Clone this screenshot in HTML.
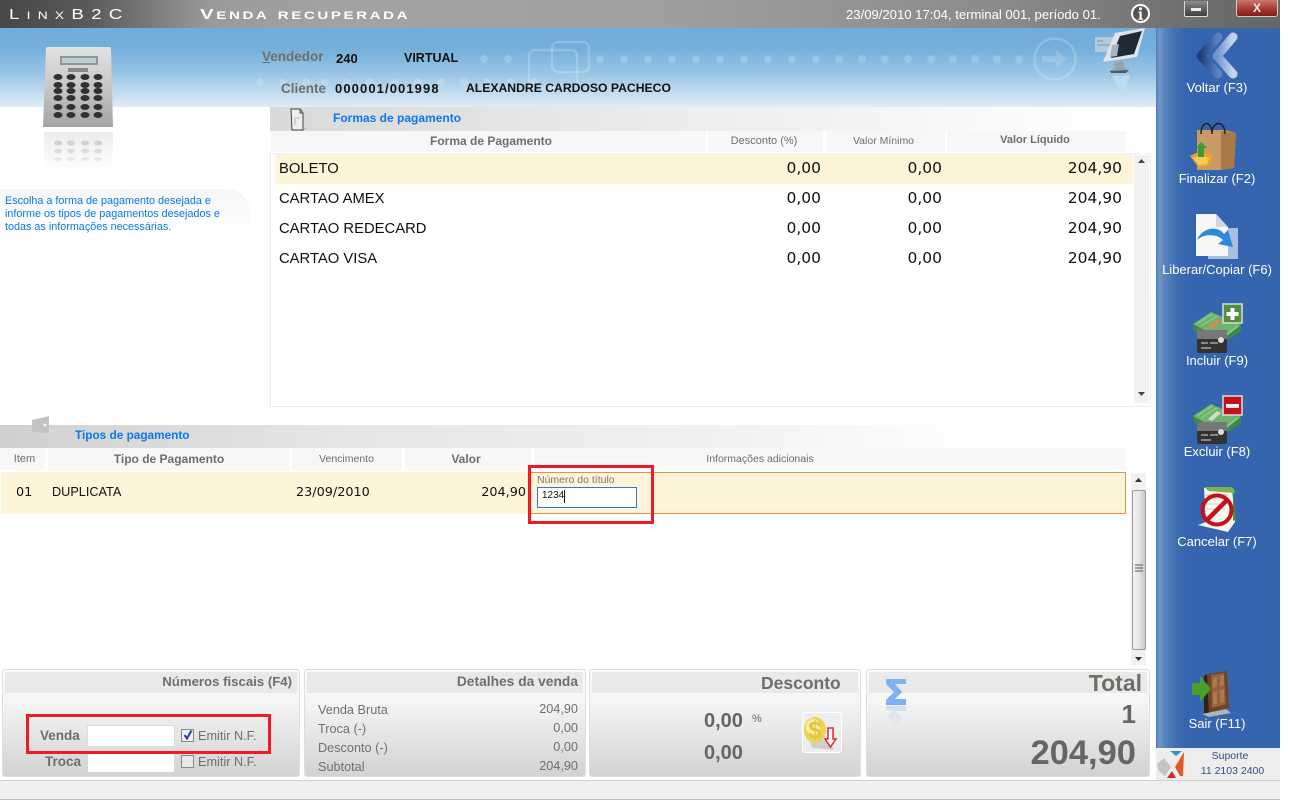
<!DOCTYPE html>
<html lang="pt-BR"><head><meta charset="utf-8"><title>Venda recuperada</title>
<style>
html,body{margin:0;padding:0;background:#fff}
#p{position:relative;width:1294px;height:810px;overflow:hidden;background:#fff;font-family:"Liberation Sans",sans-serif}
#p div,#p svg{position:absolute}
.t{white-space:nowrap;line-height:1}
.r{text-align:right}
.c{text-align:center}
.b{font-weight:bold}
.row{font-size:14.800px;color:#111}
.n{font-family:"DejaVu Sans",sans-serif;font-size:15.500px;color:#111;text-align:right;width:100px;white-space:nowrap;line-height:1}
.n2{font-family:"DejaVu Sans",sans-serif;font-size:12.800px;color:#111;white-space:nowrap;line-height:1}
.hd{top:131px;height:21px;background:#f7f7f7}
.hd2{top:448px;height:22px;background:#f7f7f7}
.g{color:#6d6f68}
.panel{top:669px;height:106px;background:linear-gradient(#fafafa 0,#f6f6f6 30px,#d2d2d2 100%);border:1px solid #d8e0e6;border-radius:3px;box-sizing:content-box}
.ph{left:2px;top:2px;height:21px;background:#e9e9e9}
.sl{left:1156px;width:122px;text-align:center;color:#fff;font-size:13px;line-height:14px;white-space:nowrap}
.red{border:3px solid #ed1c24;box-sizing:border-box}
.lbl{font-size:12.700px;color:#6f716c}
</style></head><body><div id="p">

<!-- title bar -->
<div style="left:0;top:0;width:1280px;height:28px;background:linear-gradient(90deg,#474747 0,#5a5a5a 90px,#9a9a9a 210px,#a2a2a2 330px,#a0a0a0 650px,#8b8b8b 1000px,#6d6d6d 1200px,#666 1280px)"></div>
<div class="t" style="left:9px;top:7px;font-size:15px;color:#fff;letter-spacing:5.800px;font-variant:small-caps;transform:scaleX(1.25);transform-origin:left">LinxB2C</div>
<div class="t b" style="left:200px;top:7px;font-size:15px;color:#fff;letter-spacing:1.900px;font-variant:small-caps;transform:scaleX(1.37);transform-origin:left">Venda recuperada</div>
<div class="t" style="left:846px;top:8px;font-size:13.100px;color:#fff">23/09/2010 17:04, terminal 001, período 01.</div>
<svg style="left:1130px;top:3px" width="21" height="21" viewBox="0 0 21 21"><circle cx="10.500" cy="10.500" r="8.500" fill="#555" stroke="#fff" stroke-width="2"/><circle cx="10.500" cy="5.800" r="1.500" fill="#fff"/><path d="M8.500 8.500h3.200v7h1.300v1.200H8.300v-1.200h1.200V9.700h-1z" fill="#fff"/></svg>
<div style="left:1184px;top:1px;width:24px;height:16px;background:linear-gradient(#8d8d8d,#5e5e5e 55%,#3e3e3e);border:1px solid #ddd;border-top:0;box-sizing:border-box;border-radius:0 0 2px 2px"></div>
<div style="left:1191px;top:8px;width:10px;height:3px;background:#eee"></div>
<div style="left:1236px;top:0;width:42px;height:17px;background:linear-gradient(#c9776e,#a93a31 55%,#7d1d15);border:1px solid #ccc;border-top:0;box-sizing:border-box;border-radius:0 0 3px 3px"></div>
<div class="t b c" style="left:1236px;top:2px;width:42px;font-size:12px;color:#eee">X</div>

<!-- blue header -->
<div style="left:0;top:28px;width:1156px;height:79px;background:linear-gradient(#71acda 0,#74aedb 25%,#9ac5e5 58%,#dfedf6 100%)"></div>
<svg style="left:0;top:28px" width="1156" height="79" viewBox="0 28 1156 79">
<g fill="#fff" fill-opacity=".17">
<circle cx="484" cy="59" r="4"/><circle cx="508" cy="59" r="4"/><circle cx="600" cy="59" r="4"/><circle cx="624" cy="59" r="4"/>
<circle cx="648" cy="59" r="4"/><circle cx="672" cy="59" r="4"/><circle cx="696" cy="59" r="4"/><circle cx="720" cy="59" r="4"/>
<circle cx="744" cy="59" r="4"/><circle cx="768" cy="59" r="4"/><circle cx="792" cy="59" r="4"/><circle cx="816" cy="59" r="4"/>
<circle cx="839" cy="59" r="4"/><circle cx="862" cy="59" r="4"/><circle cx="885" cy="59" r="4"/><circle cx="908" cy="59" r="4"/>
<circle cx="931" cy="59" r="4"/><circle cx="953" cy="59" r="4"/><circle cx="975" cy="59" r="4"/><circle cx="997" cy="59" r="4"/><circle cx="1019" cy="59" r="4"/>
<circle cx="260" cy="82" r="4"/><circle cx="283" cy="82" r="4"/><circle cx="306" cy="82" r="4"/><circle cx="325" cy="82" r="4"/><circle cx="347" cy="82" r="4"/><circle cx="370" cy="82" r="4"/><circle cx="395" cy="82" r="4"/><circle cx="418" cy="82" r="4"/><circle cx="441" cy="82" r="4"/><circle cx="464" cy="82" r="4"/><circle cx="487" cy="82" r="4"/><circle cx="511" cy="82" r="4"/><circle cx="534" cy="82" r="4"/>
</g>
<g fill="none" stroke="#fff" stroke-opacity=".2" stroke-width="2.500">
<rect x="529" y="50" width="48" height="38" rx="6"/><rect x="552" y="42" width="37" height="30" rx="6"/>
<circle cx="1055" cy="59" r="20.500"/>
</g>
<path d="M1042 56h14v-6l11 9-11 9v-6h-14z" fill="#fff" fill-opacity=".16"/>
</svg>
<!-- monitor -->
<svg style="left:1090px;top:28px" width="58" height="70" viewBox="0 0 58 70">
<defs><linearGradient id="mr" x1="0" y1="0" x2="0" y2="1"><stop offset="0" stop-color="#fff" stop-opacity=".35"/><stop offset="1" stop-color="#fff" stop-opacity="0"/></linearGradient></defs>
<path d="M5 9h25v15H5z" fill="#bcd0dd" fill-opacity=".85"/>
<path d="M7 13h6M7 17h14" stroke="#7d93a2" stroke-width="1"/>
<path d="M25 5L55 0 47 29 13 34z" fill="#dfe4e8"/>
<path d="M30 8l22-5-8 23-23 4z" fill="#1f2a33"/>
<path d="M22 17l7-1-2 12-7 1z" fill="#a5b5bf"/>
<path d="M24 35l9-2 1 6 5 3-8 2-11-1 5-3z" fill="#9aa2a8"/>
<path d="M20 43l19-1-3 3-15 0z" fill="#4e5a62"/>
<path d="M22 48l18-1-2 6-4 14-6-8z" fill="url(#mr)"/>
</svg>

<!-- calculator -->
<svg style="left:40px;top:44px" width="76" height="130" viewBox="0 0 76 130">
<defs><linearGradient id="cg" x1="0" y1="0" x2="0" y2="1"><stop offset="0" stop-color="#e2e2e2"/><stop offset=".55" stop-color="#c4c4c4"/><stop offset="1" stop-color="#a3a3a3"/></linearGradient>
<linearGradient id="rf" x1="0" y1="0" x2="0" y2="1"><stop offset="0" stop-color="#ececec"/><stop offset="1" stop-color="#fff"/></linearGradient></defs>
<path d="M6 4Q6 3 8 3h61q2 0 2 1l2 79H3z" fill="url(#cg)"/>
<rect x="20" y="12" width="38" height="9" fill="#8d979c"/><rect x="22" y="14" width="34" height="5" fill="#c0cfd6"/>
<rect x="28" y="24" width="20" height="4" fill="#888"/>
<g fill="#2f3133">
<ellipse cx="18" cy="33" rx="4.500" ry="3"/><ellipse cx="31" cy="33" rx="4.500" ry="3"/><ellipse cx="45" cy="33" rx="4.500" ry="3"/><ellipse cx="58" cy="33" rx="4.500" ry="3"/>
<ellipse cx="18" cy="41" rx="4.500" ry="3"/><ellipse cx="31" cy="41" rx="4.500" ry="3"/><ellipse cx="45" cy="41" rx="4.500" ry="3"/><ellipse cx="58" cy="41" rx="4.500" ry="3"/>
<ellipse cx="18" cy="47" rx="4.500" ry="3"/><ellipse cx="31" cy="47" rx="4.500" ry="3"/><ellipse cx="45" cy="47" rx="4.500" ry="3"/><ellipse cx="58" cy="47" rx="4.500" ry="3"/>
<ellipse cx="18" cy="54" rx="4.500" ry="3"/><ellipse cx="31" cy="54" rx="4.500" ry="3"/><ellipse cx="45" cy="54" rx="4.500" ry="3"/><ellipse cx="58" cy="54" rx="4.500" ry="3"/>
<ellipse cx="18" cy="63" rx="4.500" ry="3"/><ellipse cx="31" cy="63" rx="4.500" ry="3"/><ellipse cx="45" cy="63" rx="4.500" ry="3"/><ellipse cx="58" cy="63" rx="4.500" ry="3"/>
<ellipse cx="18" cy="71" rx="4.500" ry="3"/><ellipse cx="31" cy="71" rx="4.500" ry="3"/><ellipse cx="45" cy="71" rx="4.500" ry="3"/><ellipse cx="58" cy="71" rx="4.500" ry="3"/>
</g>
<path d="M4 88h69l-1 40H4z" fill="url(#rf)"/>
<g fill="#d2d2d2"><ellipse cx="18" cy="99" rx="4" ry="2.500"/><ellipse cx="31" cy="99" rx="4" ry="2.500"/><ellipse cx="45" cy="99" rx="4" ry="2.500"/><ellipse cx="58" cy="99" rx="4" ry="2.500"/>
<ellipse cx="18" cy="107" rx="4" ry="2.200" opacity=".7"/><ellipse cx="31" cy="107" rx="4" ry="2.200" opacity=".7"/><ellipse cx="45" cy="107" rx="4" ry="2.200" opacity=".7"/><ellipse cx="58" cy="107" rx="4" ry="2.200" opacity=".7"/>
<ellipse cx="18" cy="115" rx="4" ry="2" opacity=".4"/><ellipse cx="31" cy="115" rx="4" ry="2" opacity=".4"/><ellipse cx="45" cy="115" rx="4" ry="2" opacity=".4"/><ellipse cx="58" cy="115" rx="4" ry="2" opacity=".4"/></g>
</svg>

<!-- help bubble -->
<div style="left:0;top:189px;width:250px;height:76px;background:linear-gradient(#f4f6f8,#fff 60%);border-radius:0 22px 0 0"></div>
<div style="left:5px;top:195px;font-size:10.800px;line-height:13px;color:#0b78e6;white-space:nowrap">Escolha a forma de pagamento desejada e<br>informe os tipos de pagamentos desejados e<br>todas as informações necessárias.</div>

<!-- vendedor/cliente -->
<div class="t b g" style="left:262px;top:50px;font-size:13.500px"><u>V</u>endedor</div>
<div class="t b" style="left:336px;top:52px;font-size:13px;color:#111">240</div>
<div class="t b" style="left:404px;top:52px;font-size:12.500px;color:#111">VIRTUAL</div>
<div class="t b g" style="left:281px;top:82px;font-size:13.500px">Cliente</div>
<div class="t b" style="left:335px;top:82px;font-size:13px;letter-spacing:1.100px;color:#111">000001/001998</div>
<div class="t b" style="left:466px;top:82px;font-size:12.200px;color:#111">ALEXANDRE CARDOSO PACHECO</div>

<!-- Formas de pagamento -->
<div style="left:270px;top:107px;width:886px;height:24px;background:linear-gradient(90deg,#d9d9d9,#ececec 45%,#fff 96%)"></div>
<svg style="left:287px;top:106px" width="22" height="26" viewBox="0 0 22 26"><path d="M4 3h9l3 4v17H5z" fill="#eee" stroke="#444" stroke-width="1"/><path d="M13 3v4h3" fill="none" stroke="#444"/><path d="M8 12h5M8 12v7" stroke="#ccc" stroke-width="1.500"/><path d="M16 22l4 0-3 2z" fill="#bbb"/></svg>
<div class="t b" style="left:333px;top:112px;font-size:12px;color:#0a78f0">Formas de pagamento</div>

<div class="hd" style="left:271px;width:435px"></div>
<div class="hd" style="left:708px;width:115px"></div>
<div class="hd" style="left:827px;width:118px"></div>
<div class="hd" style="left:947px;width:179px"></div>
<div class="t b c g" style="left:271px;top:135px;width:440px;font-size:12px">Forma de Pagamento</div>
<div class="t c g" style="left:708px;top:136px;width:112px;font-size:11px">Desconto (%)</div>
<div class="t c g" style="left:827px;top:136px;width:113px;font-size:10.500px">Valor Mínimo</div>
<div class="t b c g" style="left:947px;top:135px;width:176px;font-size:11px">Valor Líquido</div>

<div style="left:270px;top:153px;width:881px;height:254px;border:1px solid #ececec;border-top-color:#f2f2f2;border-right-color:#eee;box-sizing:border-box"></div>
<div style="left:275px;top:154px;width:858px;height:30px;background:#fdf4d9"></div>
<div style="left:1134px;top:155px;width:15px;height:248px;background:#f1f1f1"></div>
<svg style="left:1138px;top:159px" width="8" height="5"><path d="M0 4h7L3.500 0z" fill="#444"/></svg>
<svg style="left:1138px;top:392px" width="8" height="5"><path d="M0 0h7L3.500 4z" fill="#444"/></svg>

<div class="t row" style="left:279px;top:162px">BOLETO</div>
<div class="n" style="left:721px;top:161px">0,00</div>
<div class="n" style="left:842px;top:161px">0,00</div>
<div class="n" style="left:1022px;top:161px">204,90</div>
<div class="t row" style="left:279px;top:192px">CARTAO AMEX</div>
<div class="n" style="left:721px;top:191px">0,00</div>
<div class="n" style="left:842px;top:191px">0,00</div>
<div class="n" style="left:1022px;top:191px">204,90</div>
<div class="t row" style="left:279px;top:222px">CARTAO REDECARD</div>
<div class="n" style="left:721px;top:221px">0,00</div>
<div class="n" style="left:842px;top:221px">0,00</div>
<div class="n" style="left:1022px;top:221px">204,90</div>
<div class="t row" style="left:279px;top:252px">CARTAO VISA</div>
<div class="n" style="left:721px;top:251px">0,00</div>
<div class="n" style="left:842px;top:251px">0,00</div>
<div class="n" style="left:1022px;top:251px">204,90</div>

<!-- Tipos de pagamento -->
<div style="left:0;top:425px;width:1156px;height:23px;background:linear-gradient(90deg,#d0d0d0,#e6e6e6 30%,#f0f0f0 60%,#fff 85%)"></div>
<svg style="left:30px;top:414px" width="30" height="24" viewBox="0 0 30 24"><path d="M2 6l17-4v17l-17-1z" fill="#c4c4c4"/><path d="M19 14v5l7-1z" fill="#ddd"/><circle cx="15" cy="11" r="1.300" fill="#fff"/></svg>
<div class="t b" style="left:75px;top:430px;font-size:11.800px;color:#0a78f0">Tipos de pagamento</div>

<div class="hd2" style="left:0;width:45px"></div>
<div class="hd2" style="left:48px;width:242px"></div>
<div class="hd2" style="left:292px;width:110px"></div>
<div class="hd2" style="left:405px;width:126px"></div>
<div class="hd2" style="left:534px;width:592px"></div>
<div class="t c g" style="left:0;top:454px;width:49px;font-size:11px">Item</div>
<div class="t b c g" style="left:48px;top:453px;width:242px;font-size:12px">Tipo de Pagamento</div>
<div class="t c g" style="left:292px;top:454px;width:109px;font-size:10.500px">Vencimento</div>
<div class="t b c g" style="left:405px;top:453px;width:122px;font-size:12px">Valor</div>
<div class="t c g" style="left:534px;top:454px;width:452px;font-size:10.500px">Informações adicionais</div>

<div style="left:1px;top:472px;width:527px;height:42px;background:#fdf4d9"></div>
<div style="left:528px;top:472px;width:598px;height:42px;background:#fdf4d9;border:1px solid #f58a4b;box-sizing:border-box"></div>
<div class="n2" style="left:16px;top:487px">01</div>
<div class="t" style="left:52px;top:486px;font-size:12.700px;color:#111">DUPLICATA</div>
<div class="n2" style="left:296px;top:487px">23/09/2010</div>
<div class="n2 r" style="left:426px;top:487px;width:100px">204,90</div>
<div class="t" style="left:537px;top:475px;font-size:10.500px;color:#777">Número do título</div>
<div style="left:537px;top:487px;width:100px;height:21px;background:#fff;border:1px solid #2e7ad6;box-sizing:border-box"></div>
<div class="t" style="left:542px;top:491px;font-size:10px;color:#111">1234</div>
<div style="left:564px;top:490px;width:1px;height:13px;background:#111"></div>
<div class="red" style="left:528px;top:465px;width:126px;height:59px"></div>

<div style="left:1131px;top:473px;width:15px;height:192px;background:#f1f1f1"></div>
<div style="left:1132px;top:490px;width:14px;height:160px;background:linear-gradient(90deg,#f2f2f2,#e6e6e6 50%,#c8c8c8);border:1px solid #9a9a9a;box-sizing:border-box;border-radius:2px"></div>
<svg style="left:1135px;top:564px" width="8" height="10"><path d="M0 1h8M0 4h8M0 7h8" stroke="#555" stroke-width="1"/></svg>
<svg style="left:1135px;top:478px" width="8" height="5"><path d="M0 4h7L3.500 0z" fill="#333"/></svg>
<svg style="left:1135px;top:657px" width="8" height="5"><path d="M0 0h7L3.500 4z" fill="#333"/></svg>

<!-- Panels -->
<div class="panel" style="left:2px;width:296px"><div class="ph" style="width:292px"></div></div>
<div class="panel" style="left:304px;width:280px"><div class="ph" style="width:276px"></div></div>
<div class="panel" style="left:589px;width:270px"><div class="ph" style="width:266px"></div></div>
<div class="panel" style="left:866px;width:282px"><div class="ph" style="width:278px"></div></div>

<div class="t b r g" style="left:100px;top:675px;width:192px;font-size:13.200px">Números fiscais (F4)</div>
<div class="t b r g" style="left:400px;top:675px;width:178px;font-size:13.800px">Detalhes da venda</div>
<div class="t b g" style="left:761px;top:675px;font-size:17.500px">Desconto</div>
<div class="t b r g" style="left:1000px;top:672px;width:142px;font-size:23px">Total</div>

<div class="t b g" style="left:40px;top:729px;font-size:13.500px">Venda</div>
<div style="left:87px;top:725px;width:88px;height:22px;background:#fff;border:1px solid #ddd;box-sizing:border-box"></div>
<div style="left:181px;top:729px;width:13px;height:13px;background:#eef0f6;border:1px solid #888;box-sizing:border-box"></div>
<svg style="left:182px;top:729px" width="12" height="12"><path d="M2.500 6l2.500 3.500L9.500 1.500" fill="none" stroke="#2c3f9a" stroke-width="2"/></svg>
<div class="t lbl" style="left:198px;top:730px">Emitir N.F.</div>
<div class="t b g" style="left:45px;top:755px;font-size:13.500px">Troca</div>
<div style="left:88px;top:752px;width:86px;height:20px;background:#fff"></div>
<div style="left:181px;top:755px;width:13px;height:13px;background:#e8e8e8;border:1px solid #888;box-sizing:border-box"></div>
<div class="t lbl" style="left:198px;top:756px">Emitir N.F.</div>
<div class="red" style="left:26px;top:714px;width:245px;height:40px"></div>

<div class="t lbl" style="left:318px;top:704px">Venda Bruta</div><div class="t lbl r" style="left:500px;top:703px;width:78px">204,90</div>
<div class="t lbl" style="left:318px;top:723px">Troca (-)</div><div class="t lbl r" style="left:500px;top:722px;width:78px">0,00</div>
<div class="t lbl" style="left:318px;top:742px">Desconto (-)</div><div class="t lbl r" style="left:500px;top:741px;width:78px">0,00</div>
<div class="t lbl" style="left:318px;top:761px">Subtotal</div><div class="t lbl r" style="left:500px;top:760px;width:78px">204,90</div>

<div class="t b" style="left:704px;top:711px;font-size:20px;color:#666">0,00</div>
<div class="t" style="left:752px;top:714px;font-size:11px;color:#666">%</div>
<div class="t b" style="left:704px;top:743px;font-size:20px;color:#666">0,00</div>
<div style="left:802px;top:712px;width:40px;height:41px;background:#eee;border:1px solid #fff;border-radius:3px;box-sizing:border-box"></div>
<svg style="left:802px;top:712px" width="40" height="41" viewBox="0 0 40 41"><path d="M6 24l22 6 4 8-22-2z" fill="#cfcfcf"/><ellipse cx="13" cy="18" rx="11" ry="13" fill="#ecd352"/><ellipse cx="11" cy="15" rx="7" ry="8" fill="#f9ee9a"/><text x="13" y="26" font-family="Liberation Sans,sans-serif" font-weight="bold" font-size="24" text-anchor="middle" fill="#e0c545">$</text><path d="M26 16h5v11h3l-5.500 8-5.500-8h3z" fill="#fff" stroke="#e8242a" stroke-width="1.500"/></svg>

<svg style="left:885px;top:676px" width="24" height="56" viewBox="0 0 24 56"><defs><linearGradient id="sf" x1="0" y1="0" x2="0" y2="1"><stop offset="0" stop-color="#7db2f2" stop-opacity=".3"/><stop offset="1" stop-color="#7db2f2" stop-opacity="0"/></linearGradient></defs><path d="M1 3h20v5H10l7 8-7 7h11v6H1v-5l8-8-8-8z" fill="#7db2f2"/><path d="M1 30h20v5H10l7 7-7 8-9-9 8-6-8-1z" fill="url(#sf)"/></svg>
<div class="t b r g" style="left:1036px;top:701px;width:100px;font-size:26px;color:#666">1</div>
<div class="t b r" style="left:1000px;top:736px;width:136px;font-size:34.500px;color:#666">204,90</div>

<!-- Status bar -->
<div style="left:0;top:780px;width:1280px;height:20px;background:#f0f0f0;border-top:1px solid #d0d0d0;border-bottom:1px solid #bcbcbc;box-sizing:border-box"></div>

<!-- Sidebar -->
<div style="left:1156px;top:28px;width:124px;height:720px;background:linear-gradient(90deg,#4f7cb8 0,#7097c8 3px,#5c86bd 8px,#4271b3 18px,#3565ae 30px)"></div>

<svg style="left:1192px;top:31px" width="50" height="50" viewBox="0 0 50 50">
<defs><linearGradient id="vl" x1="0" y1="0" x2="1" y2="0"><stop offset="0" stop-color="#1f3f7e"/><stop offset="1" stop-color="#5b83c4"/></linearGradient><linearGradient id="vr" x1="0" y1="0" x2="1" y2="0"><stop offset="0" stop-color="#6f93cd"/><stop offset="1" stop-color="#c3d4ee"/></linearGradient></defs>
<path d="M26 6L9 25l17 18" fill="none" stroke="url(#vl)" stroke-width="9" stroke-linejoin="round" stroke-linecap="round"/>
<path d="M41 6L25 25l16 18" fill="none" stroke="url(#vr)" stroke-width="9" stroke-linejoin="round" stroke-linecap="round"/>
</svg>
<div class="sl" style="top:81px">Voltar (F3)</div>

<svg style="left:1188px;top:118px" width="52" height="54" viewBox="0 0 52 54">
<path d="M9 12h28l11 3-2 35-13 2H9z" fill="#c99a66"/><path d="M33 13l15 2-2 35-13 2z" fill="#a97a48"/>
<path d="M13 16c0-14 11-14 11 0M24 16c0-14 13-14 13 0" fill="none" stroke="#222" stroke-width="1.500"/>
<path d="M2 38l10-5 13 4-3 10-11 3z" fill="#e8a52a"/><path d="M5 40l7-3 9 3-2 6-8 1z" fill="#f6cc55"/>
<path d="M13 24l6 6h-3v9h-6v-9H8z" fill="#3c9c34"/>
</svg>
<div class="sl" style="top:172px">Finalizar (F2)</div>

<svg style="left:1194px;top:212px" width="46" height="50" viewBox="0 0 46 50">
<path d="M14 16h30v31H14z" fill="#a9bfe0"/><path d="M2 2h20l12 13v29H2z" fill="#f6f6f6"/><path d="M22 2v13h12z" fill="#cfd6de"/>
<path d="M3 28c6-14 22-14 27-6l4-4 5 17-15-3 5-4c-6-6-18-7-26 0z" fill="#2d8ad8"/>
</svg>
<div class="sl" style="top:263px">Liberar/Copiar (F6)</div>

<svg style="left:1192px;top:302px" width="52" height="52" viewBox="0 0 52 52">
<path d="M1 22L19 10l30 13-19 15z" fill="#6fb36f"/><path d="M1 22v6l29 14 19-13v-6L30 38z" fill="#3f8a42"/><path d="M5 22L20 12M9 24l16-10M34 33l12-9" stroke="#9bd09b"/><path d="M16 25l9-8 4 2-9 8z" fill="#d88a55"/>
<rect x="5" y="28" width="30" height="23" rx="2" fill="#333"/><rect x="5" y="28" width="30" height="9" fill="#777"/><path d="M9 41h7M18 41h8M9 46h10" stroke="#ddd" stroke-width="1"/><circle cx="29" cy="38" r="3" fill="#ddd"/>
<rect x="31" y="2" width="19" height="19" fill="#4f8f3f" stroke="#ddd" stroke-width="1.500"/><path d="M38.500 6h4v4h4v4h-4v4h-4v-4h-4v-4h4z" fill="#fff"/>
</svg>
<div class="sl" style="top:354px">Incluir (F9)</div>

<svg style="left:1192px;top:394px" width="52" height="52" viewBox="0 0 52 52">
<path d="M1 22L19 10l30 13-19 15z" fill="#6fb36f"/><path d="M1 22v6l29 14 19-13v-6L30 38z" fill="#3f8a42"/><path d="M5 22L20 12M9 24l16-10M34 33l12-9" stroke="#9bd09b"/><path d="M16 25l9-8 4 2-9 8z" fill="#d8d8c8"/>
<rect x="5" y="28" width="30" height="22" rx="2" fill="#333"/><rect x="5" y="28" width="30" height="9" fill="#777"/><path d="M9 41h7M18 41h8M9 46h10" stroke="#ddd" stroke-width="1"/><circle cx="29" cy="38" r="3" fill="#ddd"/>
<rect x="31" y="2" width="19" height="19" fill="#c8101a" stroke="#ddd" stroke-width="1.500"/><rect x="34" y="10" width="13" height="4" fill="#eee"/>
</svg>
<div class="sl" style="top:445px">Excluir (F8)</div>

<svg style="left:1192px;top:485px" width="50" height="50" viewBox="0 0 50 50">
<path d="M12 3h28l3 34-7 10-30-7 8-3z" fill="#f4f4ee"/><path d="M12 2h26c3 0 5 3 5 6l-26-2z" fill="#7fb24a"/><path d="M41 6l3 28-3 2z" fill="#4a8f3c"/>
<path d="M14 10h22M14 14h20M14 19h20M14 24h20" stroke="#bbb"/>
<circle cx="25" cy="25" r="14.500" fill="#fff" fill-opacity=".35" stroke="#c4121b" stroke-width="4"/><path d="M15 35L35 15" stroke="#c4121b" stroke-width="4.500"/>
</svg>
<div class="sl" style="top:535px">Cancelar (F7)</div>

<svg style="left:1190px;top:670px" width="50" height="50" viewBox="0 0 50 50">
<path d="M17 4l20-3 2 37-20 6z" fill="#6d4526"/><path d="M21 5l13-2 2 31-14 4z" fill="#93623a"/><path d="M23 8l4-1v10l-4 1zM30 6l4-1v10l-4 1zM23 22l4-1v13l-4 1zM30 20l4-1v13l-4 1z" fill="#ad7a4d"/>
<path d="M17 4l-3 2v37l5 1z" fill="#332014"/><path d="M12 44l24-5 5 4-22 4z" fill="#aeb4ba"/>
<path d="M2 13h8V6l11 13-11 13v-7H2z" fill="#46a02a"/>
</svg>
<div class="sl" style="top:717px">Sair (F11)</div>

<!-- Support -->
<div style="left:1156px;top:748px;width:124px;height:32px;background:#ededed"></div>
<svg style="left:1156px;top:749px" width="30" height="30" viewBox="0 0 30 30">
<path d="M14 2h12l-6 5z" fill="#2f94c4"/><path d="M28 3L19 18l5 9h3z" fill="#e4572a"/><path d="M1 15l7-6 7 9-6 9-6-5z" fill="#c4c4c4"/><path d="M11 29l5-7 4 7z" fill="#d6262c"/>
</svg>
<div class="t c" style="left:1190px;top:751px;width:80px;font-size:10.500px;color:#33507f">Suporte</div>
<div class="t c" style="left:1190px;top:766px;width:85px;font-size:10.500px;color:#33507f">11 2103 2400</div>

</div></body></html>
